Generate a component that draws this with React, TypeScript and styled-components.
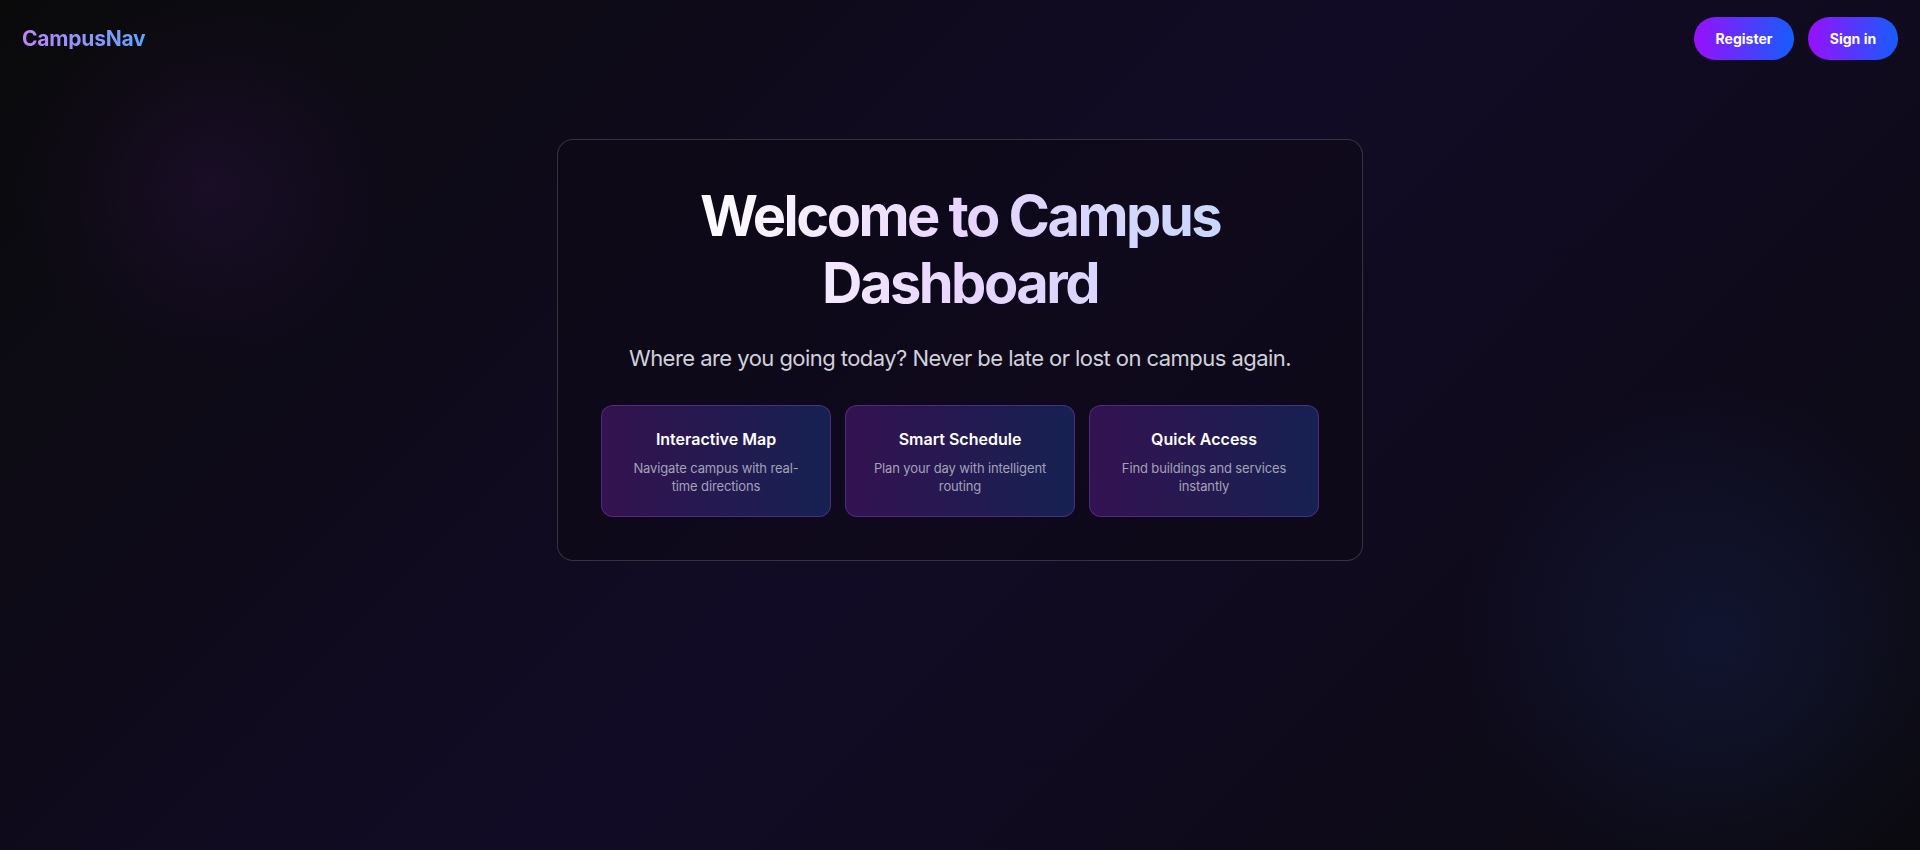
import styled, { createGlobalStyle } from "styled-components";

const GlobalStyle = createGlobalStyle`
  * {
    box-sizing: border-box;
  }
  html,
  body {
    margin: 0;
    padding: 0;
    background: #0a0a0c;
  }
  body {
    font-family: Inter, "Noto Sans", sans-serif;
    -webkit-font-smoothing: antialiased;
  }
`;

const Page = styled.div`
  position: relative;
  min-height: 850px;
  overflow: hidden;
  background:
    radial-gradient(circle at 210px 185px, rgba(88, 28, 135, 0.16) 0, rgba(88, 28, 135, 0) 190px),
    radial-gradient(circle at 1715px 640px, rgba(30, 58, 138, 0.22) 0, rgba(30, 58, 138, 0) 260px),
    linear-gradient(135deg, #0a0a0b 0%, #120b26 50%, #0b0a10 100%);
  display: flex;
  flex-direction: column;
`;

const Header = styled.header`
  display: flex;
  align-items: center;
  justify-content: space-between;
  padding: 17px 22px 0 22px;
  height: 60px;
`;

const Logo = styled.div`
  font-size: 21px;
  font-weight: 700;
  letter-spacing: -0.01em;
  background: linear-gradient(90deg, #c084fc, #60a5fa);
  -webkit-background-clip: text;
  background-clip: text;
  color: transparent;
  line-height: 1;
`;

const Actions = styled.div`
  display: flex;
  gap: 14px;
  align-items: center;
`;

const PillButton = styled.button<{ $w: number }>`
  width: ${(p) => p.$w}px;
  height: 43px;
  border: none;
  border-radius: 999px;
  background: linear-gradient(90deg, #9810fa, #155dfc);
  color: #ffffff;
  font-family: Inter, sans-serif;
  font-size: 14px;
  font-weight: 700;
  cursor: pointer;
`;

const Main = styled.main`
  display: flex;
  justify-content: center;
  padding-top: 79px;
`;

const Panel = styled.section`
  width: 806px;
  padding: 43px;
  border: 1px solid rgba(255, 255, 255, 0.17);
  border-radius: 16px;
  background: rgba(12, 10, 20, 0.55);
  display: flex;
  flex-direction: column;
  align-items: center;
`;

const Title = styled.h1`
  margin: 0;
  width: 560px;
  text-align: center;
  font-size: 56px;
  line-height: 67px;
  font-weight: 700;
  letter-spacing: -0.045em;
  background: linear-gradient(90deg, #ffffff 0%, #e9d5ff 50%, #c7d8fe 100%);
  -webkit-background-clip: text;
  background-clip: text;
  color: transparent;
`;

const Subtitle = styled.p`
  margin: 26px 0 0 0;
  font-size: 22px;
  line-height: 30px;
  letter-spacing: -0.025em;
  color: #d1d1db;
  text-align: center;
`;

const Features = styled.div`
  margin-top: 32px;
  width: 100%;
  display: grid;
  grid-template-columns: repeat(3, 1fr);
  gap: 14px;
`;

const Feature = styled.div`
  padding: 21px 20px;
  border: 1px solid rgba(168, 85, 247, 0.32);
  border-radius: 12px;
  background: linear-gradient(90deg, rgba(88, 28, 135, 0.5), rgba(30, 58, 138, 0.5));
  text-align: center;
`;

const FeatureTitle = styled.h3`
  margin: 0;
  font-size: 16px;
  line-height: 24px;
  font-weight: 600;
  color: #ffffff;
`;

const FeatureText = styled.p`
  margin: 8px 0 0 0;
  font-size: 13px;
  line-height: 18px;
  letter-spacing: -0.01em;
  color: #a3a3b5;
`;

const features = [
  { title: "Interactive Map", text: "Navigate campus with real-time directions" },
  { title: "Smart Schedule", text: "Plan your day with intelligent routing" },
  { title: "Quick Access", text: "Find buildings and services instantly" },
];

export default function App() {
  return (
    <>
      <GlobalStyle />
      <Page>
        <Header>
          <Logo>CampusNav</Logo>
          <Actions>
            <PillButton $w={100}>Register</PillButton>
            <PillButton $w={90}>Sign in</PillButton>
          </Actions>
        </Header>
        <Main>
          <Panel>
            <Title>Welcome to Campus Dashboard</Title>
            <Subtitle>Where are you going today? Never be late or lost on campus again.</Subtitle>
            <Features>
              {features.map((f) => (
                <Feature key={f.title}>
                  <FeatureTitle>{f.title}</FeatureTitle>
                  <FeatureText>{f.text}</FeatureText>
                </Feature>
              ))}
            </Features>
          </Panel>
        </Main>
      </Page>
    </>
  );
}
